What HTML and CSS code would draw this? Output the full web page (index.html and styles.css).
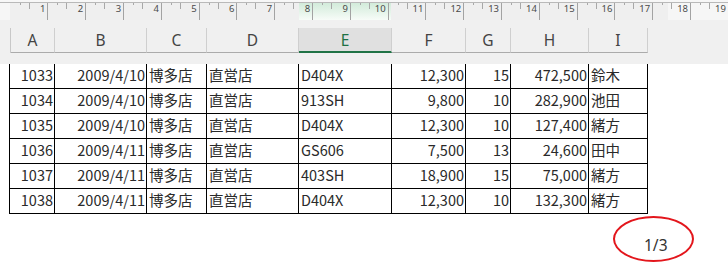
FILE: index.html
```html
<!DOCTYPE html>
<html lang="ja">
<head>
<meta charset="utf-8">
<title>Sheet</title>
<link rel="stylesheet" href="styles.css">
</head>
<body>
<div class="sheet">
  <div class="top">
    <div class="ruler">
      <div class="ruler-track">
        <span class="cm">1</span><span class="cm">2</span><span class="cm">3</span><span class="cm">4</span><span class="cm">5</span><span class="cm">6</span><span class="cm">7</span><span class="cm">8</span><span class="cm">9</span><span class="cm">10</span><span class="cm">11</span><span class="cm">12</span><span class="cm">13</span><span class="cm">14</span><span class="cm">15</span><span class="cm">16</span><span class="cm">17</span><span class="cm">18</span><span class="cm">19</span>
      </div>
    </div>
    <div class="colhead">
      <div class="ch">A</div><div class="ch">B</div><div class="ch">C</div><div class="ch">D</div><div class="ch ch-sel">E</div><div class="ch">F</div><div class="ch">G</div><div class="ch">H</div><div class="ch">I</div>
    </div>
  </div>

  <div class="grid">
    <div class="c r">1033</div><div class="c r">2009/4/10</div><div class="c">博多店</div><div class="c">直営店</div><div class="c">D404X</div><div class="c r">12,300</div><div class="c r">15</div><div class="c r">472,500</div><div class="c">鈴木</div>
    <div class="c r">1034</div><div class="c r">2009/4/10</div><div class="c">博多店</div><div class="c">直営店</div><div class="c">913SH</div><div class="c r">9,800</div><div class="c r">10</div><div class="c r">282,900</div><div class="c">池田</div>
    <div class="c r">1035</div><div class="c r">2009/4/10</div><div class="c">博多店</div><div class="c">直営店</div><div class="c">D404X</div><div class="c r">12,300</div><div class="c r">10</div><div class="c r">127,400</div><div class="c">緒方</div>
    <div class="c r">1036</div><div class="c r">2009/4/11</div><div class="c">博多店</div><div class="c">直営店</div><div class="c">GS606</div><div class="c r">7,500</div><div class="c r">13</div><div class="c r">24,600</div><div class="c">田中</div>
    <div class="c r">1037</div><div class="c r">2009/4/11</div><div class="c">博多店</div><div class="c">直営店</div><div class="c">403SH</div><div class="c r">18,900</div><div class="c r">15</div><div class="c r">75,000</div><div class="c">緒方</div>
    <div class="c r">1038</div><div class="c r">2009/4/11</div><div class="c">博多店</div><div class="c">直営店</div><div class="c">D404X</div><div class="c r">12,300</div><div class="c r">10</div><div class="c r">132,300</div><div class="c">緒方</div>
  </div>

  <div class="page-footer">1/3</div>
  <div class="mark"></div>
</div>
</body>
</html>
```

FILE: styles.css
```css
html, body {
  margin: 0;
  padding: 0;
  background: #ffffff;
}

.sheet {
  position: relative;
  width: 728px;
  height: 275px;
  overflow: hidden;
}

.top {
  background: #f0f0f0;
  height: 64px;
}

/* ruler */
.ruler {
  height: 20px;
  padding-top: 2px;
  box-sizing: border-box;
  background: #f7f7f7;
}

.ruler-track {
  display: flex;
  height: 18px;
  box-sizing: border-box;
  border-top: 1px solid #b9b9b9;
  padding-left: 10.7px;
  background-image:
    linear-gradient(to bottom, #d2ebda, #f7fcf8),
    linear-gradient(to right, #f6f6f6 0, #f6f6f6 10px, #efefef 10px, #efefef 668px, #f6f6f6 668px);
  background-size: 92px 17px, 100% 100%;
  background-position: 299px 0, 0 0;
  background-repeat: no-repeat, no-repeat;
}

.cm {
  flex: 0 0 37.8px;
  width: 37.8px;
  box-sizing: border-box;
  border-right: 1px solid #a3a3a3;
  text-align: right;
  padding-right: 2px;
  font-family: "Noto Sans", "DejaVu Sans", sans-serif;
  font-size: 9.5px;
  line-height: 12px;
  color: #4a4a4a;
  background-image:
    linear-gradient(#a8a8a8, #a8a8a8),
    linear-gradient(#a8a8a8, #a8a8a8);
  background-size: 1px 2px, 1px 6px;
  background-position: 9px 0, 18px 0;
  background-repeat: no-repeat;
}

/* column headers */
.colhead {
  display: grid;
  grid-template-columns: 44px 92px 60px 92px 93px 74px 45px 78px 59px;
  margin-top: 8px;
  margin-left: 10px;
  width: 638px;
  border-left: 1px solid #c8c8c8;
  height: 25px;
}

.ch {
  box-sizing: border-box;
  height: 25px;
  border-right: 1px solid #cfcfcf;
  border-bottom: 1px solid #ababab;
  display: flex;
  align-items: center;
  justify-content: center;
  font-family: "Noto Sans", "Open Sans", sans-serif;
  font-size: 15.5px;
  color: #444444;
  padding-bottom: 1px;
}

.ch-sel {
  background: #e0e0e0;
  color: #1e7145;
  border-bottom: 2px solid #217346;
  padding-bottom: 0;
}

/* data grid */
.grid {
  display: grid;
  grid-template-columns: 45px 92px 60px 92px 93px 74px 45px 78px 59px;
  margin-left: 9px;
  width: 639px;
  border-left: 1px solid #000000;
}

.c {
  box-sizing: border-box;
  height: 25px;
  border-right: 1px solid #000000;
  border-bottom: 1px solid #000000;
  padding: 0 2px 2px 2px;
  font-family: "Noto Sans CJK JP", "Noto Sans", sans-serif;
  font-size: 14.5px;
  line-height: 22px;
  color: #2a2a2a;
  white-space: nowrap;
  overflow: hidden;
}

.r {
  text-align: right;
  padding-right: 1px;
}

/* page number */
.page-footer {
  margin-top: 21px;
  margin-left: 644px;
  font-family: "Noto Sans", "Open Sans", sans-serif;
  font-size: 15.5px;
  line-height: 20px;
  color: #333333;
}

.mark {
  position: absolute;
  left: 613px;
  top: 216px;
  width: 81px;
  height: 46px;
  box-sizing: border-box;
  border: 2px solid #e3161c;
  border-radius: 50%;
}
```
